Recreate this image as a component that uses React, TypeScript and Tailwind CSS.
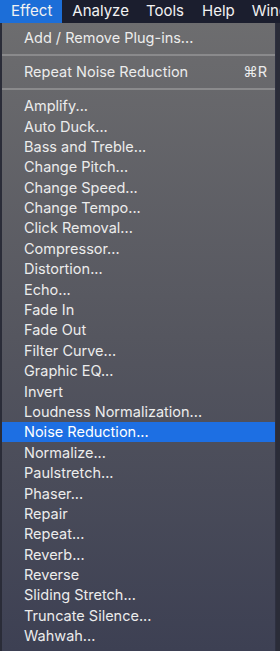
const items = [
  "Amplify...",
  "Auto Duck...",
  "Bass and Treble...",
  "Change Pitch...",
  "Change Speed...",
  "Change Tempo...",
  "Click Removal...",
  "Compressor...",
  "Distortion...",
  "Echo...",
  "Fade In",
  "Fade Out",
  "Filter Curve...",
  "Graphic EQ...",
  "Invert",
  "Loudness Normalization...",
  "Noise Reduction...",
  "Normalize...",
  "Paulstretch...",
  "Phaser...",
  "Repair",
  "Repeat...",
  "Reverb...",
  "Reverse",
  "Sliding Stretch...",
  "Truncate Silence...",
  "Wahwah...",
];

function Separator() {
  return (
    <div className="h-[13.5px] flex items-center">
      <div className="w-full h-[2px] bg-[#8a8a8c]" />
    </div>
  );
}

export default function App() {
  return (
    <div
      className="w-[280px] h-[651px] overflow-hidden bg-[#2a2c38] text-[14.5px] text-[#ececec]"
      style={{ fontFamily: "Inter, 'Noto Sans', sans-serif" }}
    >
      {/* Menu bar */}
      <div className="h-[23px] bg-[#1b1e2e] flex items-center text-[15px] text-[#f2f2f2] whitespace-nowrap">
        <div className="h-full bg-[#1c6ed8] pl-[11px] pr-[10px] flex items-center">Effect</div>
        <div className="ml-[10px]">Analyze</div>
        <div className="ml-[17px]">Tools</div>
        <div className="ml-[18px]">Help</div>
        <div className="ml-[17px]">Window</div>
      </div>

      {/* Dropdown */}
      <div className="ml-[2px] w-[274px] h-[628px] border-r border-[#2e3040] bg-gradient-to-b from-[#6d6d6f] via-[#55565f] to-[#3d4053] pt-[5px]">
        <div className="h-[20.4px] flex items-center pl-[22px]">Add / Remove Plug-ins...</div>
        <Separator />
        <div className="h-[20.4px] flex items-center justify-between pl-[22px] pr-[8px]">
          <span>Repeat Noise Reduction</span>
          <span>⌘R</span>
        </div>
        <Separator />
        {items.map((label) => (
          <div
            key={label}
            className={`h-[20.4px] flex items-center pl-[22px] ${
              label === "Noise Reduction..." ? "bg-[#1d6fe3] text-white" : ""
            }`}
          >
            {label}
          </div>
        ))}
      </div>
    </div>
  );
}
